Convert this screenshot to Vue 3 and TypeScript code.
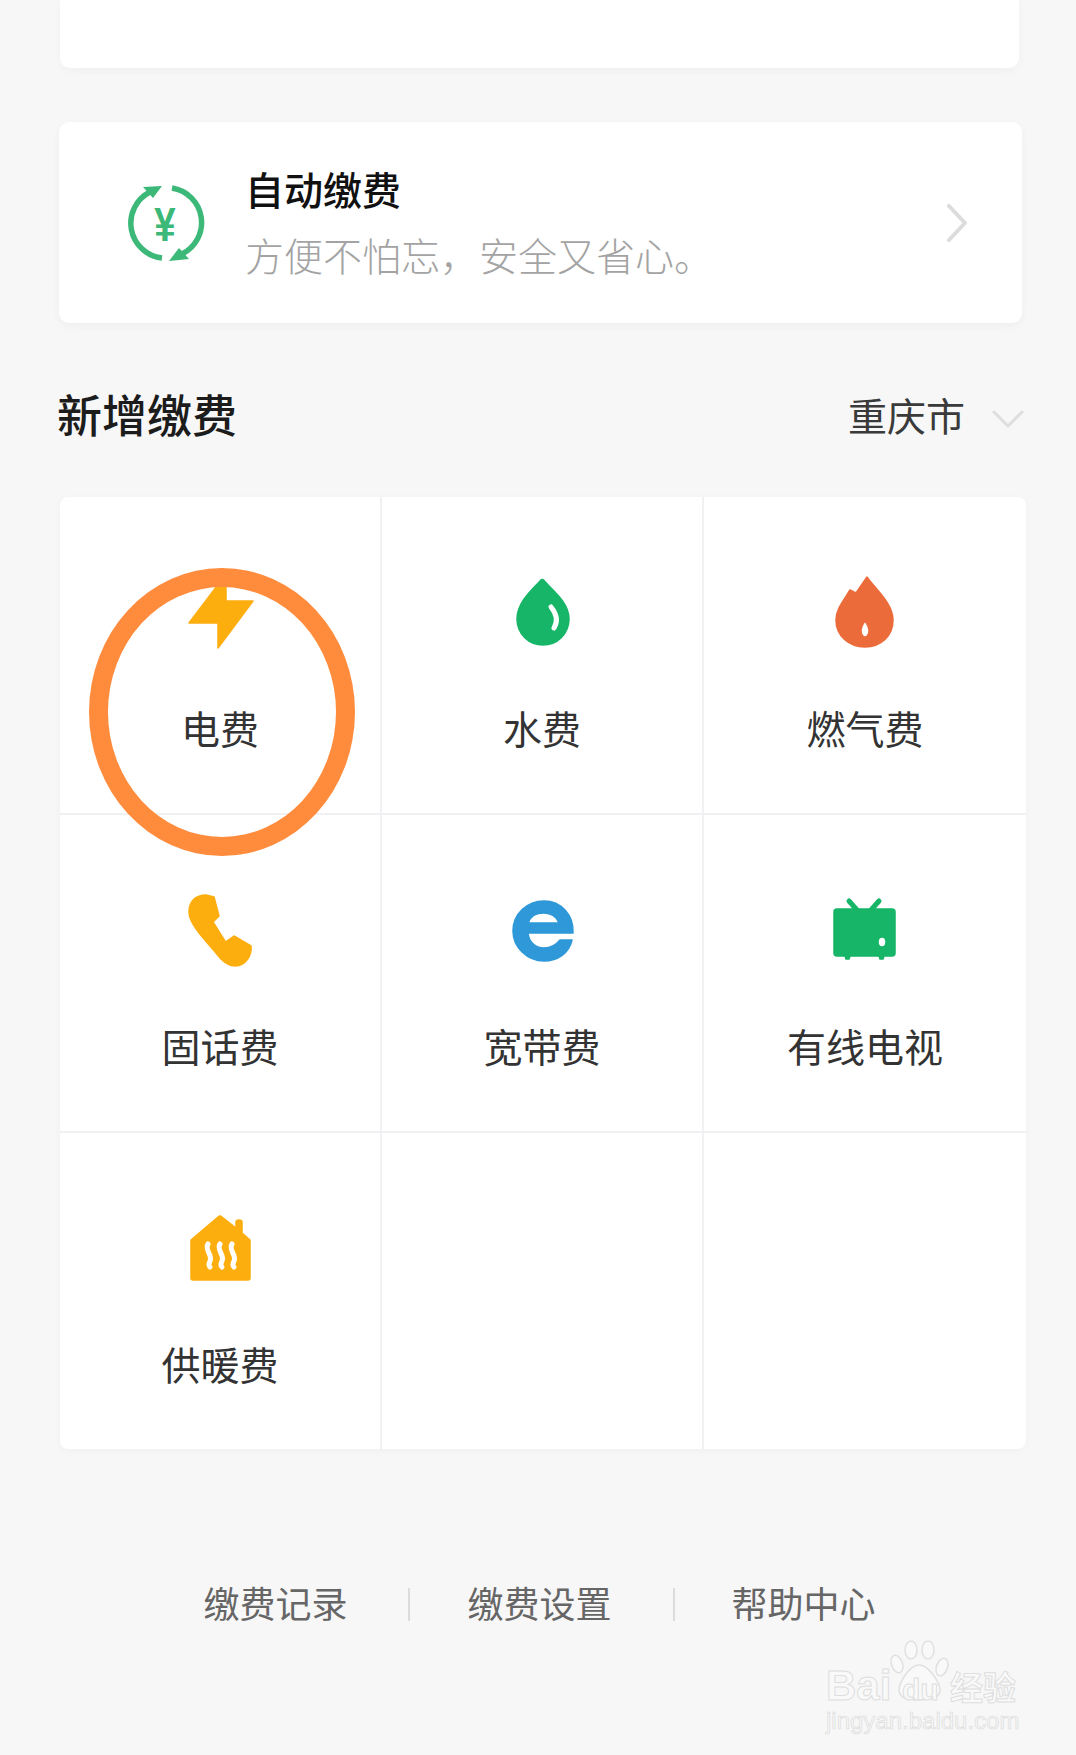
<script setup lang="ts">
interface Shape {
  d: string
  fill?: string
  stroke?: string
}

interface Biller {
  label: string
  color: string
  shapes: Shape[]
}

const amber = "#fdae0f"
const green = "#16b567"

const billers: Biller[] = [
  {
    label: "电费",
    color: amber,
    shapes: [{ d: "M46 16V32H73L38 79V54H9L37 17Z" }],
  },
  {
    label: "水费",
    color: green,
    shapes: [
      { d: "M38.5 11.5Q40 9.5 42 11.5C50 21 67 33 67 50C67 65 55 76 41 76C27 76 15 65 15 50C15 33 31 20 38.5 11.5Z" },
      { d: "M49 38Q58 49 52 59", fill: "none", stroke: "#fff" },
    ],
  },
  {
    label: "燃气费",
    color: "#ec6b3a",
    shapes: [
      { d: "M42 8C50 20 68 34 68 51C68 67 56 78 40 78C24 78 11 67 11 51C11 40 19 31 25 21L31 24ZM40 52C37 56 36 59 36 62C36 65 38 68 40 68C42 68 44 65 44 62C44 59 43 56 40 52Z" },
    ],
  },
  {
    label: "固话费",
    color: amber,
    shapes: [
      { d: "M26 8L34 10L39 29L33 35L45.5 55L54 49L71 59C72 68 66 79 55 79C48 79 41 73 36 66C28 56 9 38 9 25C9 14 16 8 26 8Z" },
    ],
  },
  {
    label: "宽带费",
    color: "#2e98d8",
    shapes: [
      { d: "M71 46H26C27 55 33 61 42 61C49 61 54 58 58 53H70C67 66 56 74 42 74C25 74 11 60 11 44C11 27 25 14 42 14C59 14 72 28 71 46ZM26 36H57C55 30 49 26 42 26C34 26 28 30 26 36Z" },
    ],
  },
  {
    label: "有线电视",
    color: green,
    shapes: [
      { d: "M24 14L32 23M54 14L46 23", fill: "none", stroke: green },
      { d: "M12 22H67Q70 22 70 25V66Q70 69 67 69H59L58 72H55L54 69H25L24 72H21L20 69H12Q9 69 9 66V25Q9 22 12 22ZM57 50C54.5 50 53 52.500 53 55C53 57.500 54.500 60 57 60C59.500 60 61 57.500 61 55C61 52.500 59.500 50 57 50Z" },
    ],
  },
  {
    label: "供暖费",
    color: amber,
    shapes: [
      { d: "M38 12Q40 10 42 12L56 23V17Q56 15 59 15Q62 15 62 17V28L70 35V73Q70 75 68 75H13Q11 75 11 73V35Z" },
      { d: "M28 39C24 45 33 50 30 56C29 59 28 60 30 62M40 39C36 45 45 50 42 56C41 59 40 60 42 62M52 39C48 45 57 50 54 56C53 59 52 60 54 62", fill: "none", stroke: "#fff" },
    ],
  },
]

const emptyCells = 2
const footerLinks = ["缴费记录", "缴费设置", "帮助中心"]
</script>

<template>
  <div class="page">
    <div class="top-card"></div>

    <div class="auto-card">
      <svg class="auto-icon" viewBox="0 0 80 80">
        <path d="M24 9A35 35 0 0 0 36 75" fill="none" stroke="#3cb878" stroke-width="5.500" />
        <path d="M46 5A35 35 0 0 1 56 71" fill="none" stroke="#3cb878" stroke-width="5.500" />
        <path d="M36 3L17 4L27 15Z" fill="#3cb878" />
        <path d="M43 78L63 76L53 65Z" fill="#3cb878" />
        <text transform="translate(39 58) scale(0.8 1)" class="yen">¥</text>
      </svg>
      <div class="auto-text">
        <div class="auto-title">自动缴费</div>
        <div class="auto-sub">方便不怕忘，安全又省心。</div>
      </div>
      <svg class="arrow-right" viewBox="0 0 22 38">
        <path d="M3 2L19 19L3 36" fill="none" stroke="#dcdcdc" stroke-width="4" stroke-linecap="round" stroke-linejoin="round" />
      </svg>
    </div>

    <div class="section-head">
      <div class="section-title">新增缴费</div>
      <div class="city">
        <span>重庆市</span>
        <svg class="arrow-down" viewBox="0 0 32 18">
          <path d="M2 2L16 16L30 2" fill="none" stroke="#dedede" stroke-width="3" stroke-linecap="round" stroke-linejoin="round" />
        </svg>
      </div>
    </div>

    <div class="grid">
      <div v-for="item in billers" :key="item.label" class="cell">
        <svg class="cell-icon" viewBox="0 0 80 80" stroke-linecap="round" stroke-linejoin="round">
          <path
            v-for="(shape, i) in item.shapes"
            :key="i"
            :d="shape.d"
            :fill="shape.fill || item.color"
            :stroke="shape.stroke || item.color"
            :stroke-width="shape.stroke ? 5 : 1.500"
            fill-rule="evenodd"
          />
        </svg>
        <div class="cell-label">{{ item.label }}</div>
      </div>
      <div v-for="n in emptyCells" :key="n" class="cell"></div>
      <div class="ring"></div>
    </div>

    <div class="footer">
      <template v-for="(link, i) in footerLinks" :key="link">
        <i v-if="i > 0" class="divider"></i>
        <span class="footer-link">{{ link }}</span>
      </template>
    </div>

    <div class="watermark">
      <svg class="paw" viewBox="0 0 60 62">
        <g fill="#f9f9f9" stroke="#e0e0e0" stroke-width="1.500">
          <ellipse cx="7" cy="24" rx="5.500" ry="9" transform="rotate(-20 7 24)" />
          <ellipse cx="21" cy="10" rx="6" ry="9" />
          <ellipse cx="38" cy="10" rx="6" ry="9" />
          <ellipse cx="52" cy="27" rx="5.500" ry="9" transform="rotate(20 52 27)" />
          <path d="M29 25C38 25 50 42 50 50C50 58 40 60 29 60C18 60 9 58 9 50C9 42 20 25 29 25Z" />
        </g>
      </svg>
      <div class="wm-main">
        <span class="wm-bai">Bai</span>
        <span class="wm-du">du</span>
        <span class="wm-cn">经验</span>
      </div>
      <div class="wm-url">jingyan.baidu.com</div>
    </div>
  </div>
</template>

<style scoped>
.page {
  position: relative;
  width: 1076px;
  height: 1755px;
  overflow: hidden;
  background: #f7f7f7;
  font-family: "Noto Sans CJK SC", "Noto Sans", sans-serif;
  color: #333;
}

.top-card {
  width: 959px;
  height: 68px;
  margin-left: 60px;
  background: #fff;
  border-radius: 0 0 10px 10px;
  box-shadow: 0 3px 10px rgba(0, 0, 0, 0.03);
}

.auto-card {
  display: flex;
  align-items: center;
  box-sizing: border-box;
  width: 963px;
  height: 201px;
  margin: 54px 0 0 59px;
  padding: 0 54px 0 67px;
  background: #fff;
  border-radius: 10px;
  box-shadow: 0 3px 10px rgba(0, 0, 0, 0.04);
}

.auto-icon {
  width: 80px;
  height: 80px;
  flex: none;
}

.yen {
  font-family: "Liberation Sans", sans-serif;
  font-size: 48px;
  font-weight: 700;
  text-anchor: middle;
  fill: #3cb878;
}

.auto-text {
  flex: 1;
  margin-left: 39px;
  padding-bottom: 4px;
}

.auto-title {
  font-size: 39px;
  line-height: 50px;
  font-weight: 500;
  color: #111;
}

.auto-sub {
  margin-top: 16px;
  font-size: 39px;
  line-height: 50px;
  font-weight: 300;
  color: #a3a3a3;
}

.arrow-right {
  width: 22px;
  height: 38px;
  flex: none;
}

.section-head {
  display: flex;
  justify-content: space-between;
  align-items: center;
  width: 967px;
  height: 60px;
  margin: 61px 0 0 57px;
}

.section-title {
  font-size: 45px;
  line-height: 60px;
  font-weight: 500;
  color: #1c1c1c;
}

.city {
  display: flex;
  align-items: center;
  font-size: 39px;
  line-height: 50px;
  color: #3a3a3a;
}

.arrow-down {
  width: 32px;
  height: 18px;
  margin: 10px 0 0 27px;
}

.grid {
  position: relative;
  display: grid;
  grid-template-columns: 320px 320px 322px;
  grid-auto-rows: 316px;
  gap: 2px;
  width: 966px;
  margin: 53px 0 0 60px;
  background: #f1f1f3;
  border-radius: 8px;
  overflow: hidden;
  box-shadow: 0 2px 8px rgba(0, 0, 0, 0.03);
}

.cell {
  display: flex;
  flex-direction: column;
  align-items: center;
  padding-top: 72px;
  background: #fff;
}

.cell-icon {
  width: 80px;
  height: 80px;
  flex: none;
}

.cell-label {
  margin-top: 53px;
  font-size: 39px;
  line-height: 50px;
  color: #333;
}

.ring {
  position: absolute;
  left: 29px;
  top: 71px;
  box-sizing: border-box;
  width: 266px;
  height: 288px;
  border: 19px solid #ff8c3d;
  border-radius: 50%;
}

.footer {
  display: flex;
  justify-content: center;
  align-items: center;
  gap: 59px;
  margin-top: 128px;
  padding-left: 3px;
  height: 50px;
}

.footer-link {
  font-size: 36px;
  line-height: 50px;
  color: #666;
}

.divider {
  width: 2px;
  height: 33px;
  margin: 4px -2px 0 2px;
  background: #dcdcdc;
}

.watermark {
  position: absolute;
  left: 826px;
  top: 1640px;
  width: 200px;
  height: 95px;
  font-family: "Liberation Sans", sans-serif;
}

.paw {
  position: absolute;
  left: 64px;
  top: 0;
  width: 60px;
  height: 62px;
}

.wm-main {
  position: absolute;
  left: 0;
  top: 24px;
  width: 200px;
  line-height: 44px;
  color: #f9f9f9;
  -webkit-text-stroke: 1px #dedede;
}

.wm-bai {
  position: absolute;
  left: 0;
  font-size: 42px;
  font-weight: 700;
}

.wm-du {
  position: absolute;
  left: 76px;
  top: 4px;
  font-size: 30px;
  font-weight: 700;
}

.wm-cn {
  position: absolute;
  left: 124px;
  top: 0;
  font-family: "Noto Sans CJK SC", sans-serif;
  font-size: 33px;
  font-weight: 700;
}

.wm-url {
  position: absolute;
  left: 0;
  top: 68px;
  font-size: 24px;
  line-height: 26px;
  color: #f7f7f7;
  -webkit-text-stroke: 0.7px #dcdcdc;
}
</style>

<style>
html,
body {
  background: #f7f7f7;
}
</style>
